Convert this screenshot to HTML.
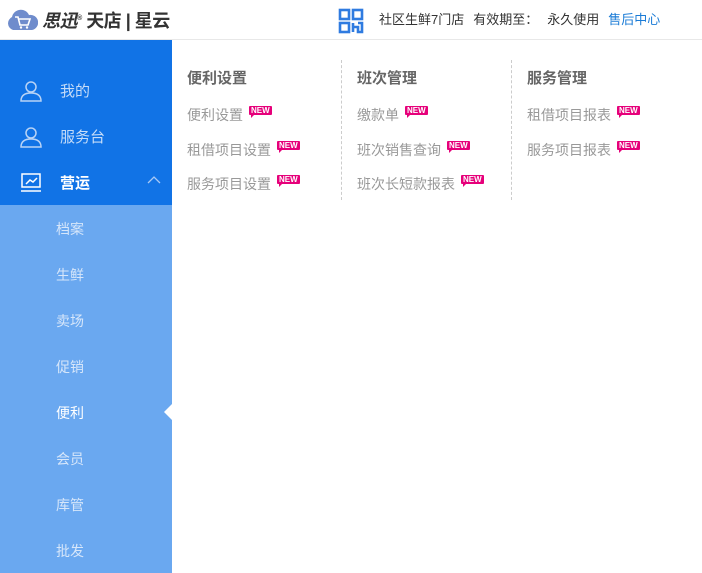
<!DOCTYPE html>
<html><head><meta charset="utf-8"><style>
*{margin:0;padding:0;box-sizing:border-box}
body{width:702px;height:573px;overflow:hidden;background:#fff;font-family:"Liberation Sans","Noto Sans CJK SC",sans-serif;position:relative}
.hdr{position:absolute;left:0;top:0;width:702px;height:40px;border-bottom:1px solid #e8e8e8;background:#fff}
.logo{position:absolute;left:6px;top:7px;display:flex;align-items:center}
.lt{font-size:18px;font-weight:bold;color:#333;margin-left:4px;letter-spacing:-0.5px;font-style:italic}
.lt2{font-size:18px;font-weight:bold;color:#333;font-style:normal}
.info{position:absolute;left:379px;top:9px;font-size:13px;color:#333}
.info span{margin-right:9px}
.side{position:absolute;left:0;top:40px;width:172px;height:533px;background:#6aa8f0}
.top{position:absolute;left:0;top:0;width:172px;height:165px;background:#1173e6}
.it{position:absolute;left:60px;font-size:15px;color:#c5dcf8}
.sub{position:absolute;left:56px;font-size:14px;color:#d6e6fa}
.col{position:absolute;top:60px;height:140px}
.h{position:absolute;font-size:15px;font-weight:bold;color:#666;top:7px}
.l{position:absolute;font-size:14px;color:#999;white-space:nowrap}
.new{display:inline-block;background:#e6007a;color:#fff;font-size:8px;font-weight:bold;line-height:9px;padding:0 2px;border-radius:1px;vertical-align:top;margin-left:6px;margin-top:1px;position:relative}
.new:after{content:"";position:absolute;left:2px;bottom:-3px;border-left:3px solid #e6007a;border-bottom:3px solid transparent}
.dash{position:absolute;top:60px;height:140px;border-left:1px dashed #ccc}
</style></head><body>
<div class="hdr">
 <div class="logo">
  <svg width="32" height="22" viewBox="0 0 32 22"><path d="M7 21 A7 7 0 0 1 6 8 A9 9 0 0 1 23 6 A7 7 0 0 1 26 21 Z" fill="#6f8ccc"/><path d="M9 8 h3 l2 8 h8 l2-6 h-11" stroke="#fff" stroke-width="1.6" fill="none"/><circle cx="15" cy="18.5" r="1.2" fill="#fff"/><circle cx="21" cy="18.5" r="1.2" fill="#fff"/></svg>
  <span class="lt">思迅<sup style="font-size:7px">®</sup> <span class="lt2">天店 | 星云</span></span>
 </div>
 <svg style="position:absolute;left:338px;top:8px" width="26" height="26" viewBox="0 0 26 26" fill="none" stroke="#2f7be0" stroke-width="2.6"><rect x="2" y="2" width="9" height="9"/><rect x="15" y="2" width="9" height="9"/><rect x="2" y="15" width="9" height="9"/><path d="M15 15v9M15 19h5v5h4v-9h-4"/></svg>
 <div class="info"><span>社区生鲜7门店</span><span>有效期至：</span><span>永久使用</span><span style="color:#1a7bd6">售后中心</span></div>
</div>
<div class="side">
 <div class="top">
  <svg style="position:absolute;left:20px;top:40px" width="22" height="22" viewBox="0 0 22 22" fill="none" stroke="#b8d3f6" stroke-width="1.5"><circle cx="11" cy="7" r="5"/><path d="M1 21c0-6 4-8 10-8s10 2 10 8z"/></svg>
  <div class="it" style="top:40px">我的</div>
  <svg style="position:absolute;left:20px;top:86px" width="22" height="22" viewBox="0 0 22 22" fill="none" stroke="#b8d3f6" stroke-width="1.5"><circle cx="11" cy="7" r="5"/><path d="M1 21c0-6 4-8 10-8s10 2 10 8z"/></svg>
  <div class="it" style="top:86px">服务台</div>
  <svg style="position:absolute;left:20px;top:133px" width="22" height="20" viewBox="0 0 22 20" fill="none" stroke="#fff" stroke-width="1.5"><rect x="2" y="1" width="18" height="13"/><path d="M6 11l4-4 3 2 4-4M1 18h20"/></svg>
  <div class="it" style="top:132px;color:#fff;font-weight:bold">营运</div>
  <svg style="position:absolute;left:147px;top:135px" width="14" height="9" viewBox="0 0 14 9" fill="none" stroke="#a9c9f5" stroke-width="1.3"><path d="M1 8l6-6 6 6"/></svg>
 </div>
 <div class="sub" style="top:179px">档案</div>
 <div class="sub" style="top:225px">生鲜</div>
 <div class="sub" style="top:271px">卖场</div>
 <div class="sub" style="top:317px">促销</div>
 <div class="sub" style="top:363px;color:#fff">便利</div>
 <div class="sub" style="top:409px">会员</div>
 <div class="sub" style="top:455px">库管</div>
 <div class="sub" style="top:501px">批发</div>
 <div style="position:absolute;left:164px;top:364px;border-right:8px solid #fff;border-top:8px solid transparent;border-bottom:8px solid transparent"></div>
</div>
<div class="col" style="left:187px;width:150px">
 <div class="h">便利设置</div>
 <div class="l" style="top:45px">便利设置<span class="new">NEW</span></div>
 <div class="l" style="top:80px">租借项目设置<span class="new">NEW</span></div>
 <div class="l" style="top:114px">服务项目设置<span class="new">NEW</span></div>
</div>
<div class="dash" style="left:341px"></div>
<div class="col" style="left:357px;width:150px">
 <div class="h">班次管理</div>
 <div class="l" style="top:45px">缴款单<span class="new">NEW</span></div>
 <div class="l" style="top:80px">班次销售查询<span class="new">NEW</span></div>
 <div class="l" style="top:114px">班次长短款报表<span class="new">NEW</span></div>
</div>
<div class="dash" style="left:511px"></div>
<div class="col" style="left:527px;width:160px">
 <div class="h">服务管理</div>
 <div class="l" style="top:45px">租借项目报表<span class="new">NEW</span></div>
 <div class="l" style="top:80px">服务项目报表<span class="new">NEW</span></div>
</div>
</body></html>
